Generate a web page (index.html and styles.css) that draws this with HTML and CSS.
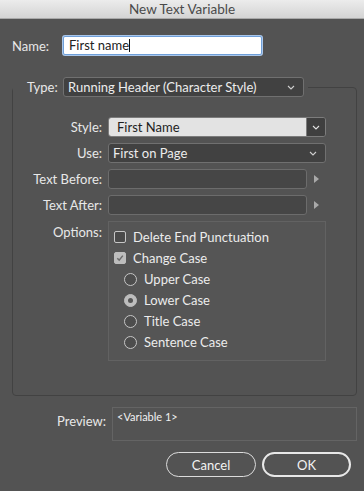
FILE: index.html
```html
<!DOCTYPE html>
<html>
<head>
<meta charset="utf-8">
<link rel="stylesheet" href="styles.css">
</head>
<body>
<div class="dialog">
  <div class="titlebar">New Text Variable</div>
  <div class="content">
    <div class="name-row">
      <span class="lbl name-lbl">Name:</span>
      <div class="name-input">First name<span class="caret"></span></div>
    </div>

    <fieldset class="group">
      <legend class="legend">
        <span class="lbl">Type:</span>
        <div class="select type-select">
          <span>Running Header (Character Style)</span>
          <svg class="chev" width="8" height="5" viewBox="0 0 8 5"><path d="M1 1 L4 4 L7 1" fill="none" stroke="#cfcfcf" stroke-width="1.1"/></svg>
        </div>
      </legend>

      <div class="grid">
        <span class="lbl r">Style:</span>
        <div class="select style-select">
          <span class="style-val">First Name</span>
          <span class="style-btn"><svg width="8" height="5" viewBox="0 0 8 5"><path d="M1 1 L4 4 L7 1" fill="none" stroke="#e0e0e0" stroke-width="1.1"/></svg></span>
        </div>

        <span class="lbl r">Use:</span>
        <div class="select use-select">
          <span>First on Page</span>
          <svg class="chev" width="8" height="5" viewBox="0 0 8 5"><path d="M1 1 L4 4 L7 1" fill="none" stroke="#cfcfcf" stroke-width="1.1"/></svg>
        </div>

        <span class="lbl r">Text Before:</span>
        <div class="field-row">
          <div class="field"></div>
          <svg class="arrow" width="5" height="8" viewBox="0 0 5 8"><path d="M0 0 L5 4 L0 8 Z" fill="#a9a9a9"/></svg>
        </div>

        <span class="lbl r">Text After:</span>
        <div class="field-row">
          <div class="field"></div>
          <svg class="arrow" width="5" height="8" viewBox="0 0 5 8"><path d="M0 0 L5 4 L0 8 Z" fill="#a9a9a9"/></svg>
        </div>

        <span class="lbl r opt-lbl">Options:</span>
        <div class="options">
          <div class="opt">
            <span class="cb"></span><span>Delete End Punctuation</span>
          </div>
          <div class="opt">
            <span class="cb checked"><svg width="10" height="10" viewBox="0 0 10 10"><path d="M2.3 5.2 L4.2 7.2 L7.8 2.6" fill="none" stroke="#6b6b6b" stroke-width="1.5"/></svg></span><span>Change Case</span>
          </div>
          <div class="opt radio-opt">
            <span class="rb"></span><span>Upper Case</span>
          </div>
          <div class="opt radio-opt">
            <span class="rb on"></span><span>Lower Case</span>
          </div>
          <div class="opt radio-opt">
            <span class="rb"></span><span>Title Case</span>
          </div>
          <div class="opt radio-opt">
            <span class="rb"></span><span>Sentence Case</span>
          </div>
        </div>
      </div>
    </fieldset>

    <div class="preview-row">
      <span class="lbl r preview-lbl">Preview:</span>
      <div class="preview">&lt;Variable 1&gt;</div>
    </div>

    <div class="buttons">
      <button class="btn">Cancel</button>
      <button class="btn default">OK</button>
    </div>
  </div>
</div>
</body>
</html>
```

FILE: styles.css
```css
html, body {
  margin: 0;
  padding: 0;
  background: #535353;
}
body {
  width: 364px;
  height: 491px;
  overflow: hidden;
  font-family: "Lato", "Liberation Sans", sans-serif;
  font-size: 13px;
  color: #e6e6e6;
}
.dialog {
  width: 364px;
  height: 491px;
  background: #535353;
}
.titlebar {
  height: 18px;
  line-height: 18px;
  text-align: center;
  background: linear-gradient(#ececec, #d4d4d4);
  border-bottom: 1px solid #a9a9a9;
  color: #4a4a4a;
  font-size: 13.5px;
}
.content {
  padding: 17px 0 0 0;
}
.lbl {
  color: #e8e8e8;
  white-space: nowrap;
}
.r {
  text-align: right;
}
.name-row {
  display: flex;
  align-items: center;
  padding-left: 12px;
  height: 19px;
}
.name-lbl {
  width: 51px;
}
.name-input {
  box-sizing: border-box;
  width: 199px;
  height: 19px;
  background: #fff;
  border: 1px solid #6f9fd8;
  box-shadow: 0 0 0 1px #a9c6ea;
  border-radius: 2px;
  color: #222;
  padding-left: 5px;
  line-height: 17px;
  display: flex;
  align-items: center;
}
.caret {
  display: inline-block;
  width: 1px;
  height: 13px;
  background: #111;
}
.group {
  margin: 22px 0 0 12px;
  width: 345px;
  box-sizing: border-box;
  height: 319px;
  border: 1px solid #424242;
  border-radius: 4px;
  padding: 20px 0 0 0;
}
.legend {
  display: flex;
  align-items: center;
  padding: 0 4px 0 14px;
  margin-left: 0;
}
.legend .lbl {
  width: 36px;
}
.select {
  box-sizing: border-box;
  height: 20px;
  border: 1px solid #707070;
  border-radius: 3px;
  background: #414141;
  display: flex;
  align-items: center;
  justify-content: space-between;
  padding: 0 8px 0 4px;
  color: #ececec;
}
.type-select {
  width: 241px;
}
.grid {
  display: grid;
  grid-template-columns: 89px 218px;
  column-gap: 6px;
  row-gap: 6px;
  align-items: center;
  padding-left: 0;
}
.style-select {
  padding: 0;
  overflow: hidden;
  border-color: #7c7c7c;
}
.style-val {
  flex: 1;
  height: 100%;
  background: #e3e3e3;
  color: #1e1e1e;
  padding-left: 8px;
  display: flex;
  align-items: center;
}
.style-btn {
  width: 18px;
  height: 100%;
  border-left: 1px solid #7c7c7c;
  background: #3f3f3f;
  display: flex;
  align-items: center;
  justify-content: center;
}
.use-select {
  padding-left: 4px;
}
.field-row {
  display: flex;
  align-items: center;
  gap: 7px;
}
.field {
  box-sizing: border-box;
  width: 199px;
  height: 20px;
  border: 1px solid #6c6c6c;
  border-radius: 3px;
  background: #464646;
}
.opt-lbl {
  align-self: start;
  padding-top: 3px;
}
.options {
  box-sizing: border-box;
  height: 140px;
  border: 1px solid #626262;
  background: #555555;
  padding: 8px 0 0 5px;
  display: flex;
  flex-direction: column;
  gap: 7px;
}
.opt {
  display: flex;
  align-items: center;
  gap: 7px;
  height: 14px;
  color: #ececec;
}
.radio-opt {
  padding-left: 10px;
}
.cb {
  box-sizing: border-box;
  width: 12px;
  height: 12px;
  border: 1px solid #c6c6c6;
  border-radius: 2px;
  background: #4a4a4a;
  display: flex;
  align-items: center;
  justify-content: center;
}
.cb.checked {
  background: #bdbdbd;
  border-color: #bdbdbd;
}
.rb {
  box-sizing: border-box;
  width: 13px;
  height: 13px;
  border: 1px solid #c6c6c6;
  border-radius: 50%;
  background: #4d4d4d;
  display: flex;
  align-items: center;
  justify-content: center;
}
.rb.on {
  background: #bdbdbd;
  border-color: #bdbdbd;
}
.rb.on::after {
  content: "";
  width: 5px;
  height: 5px;
  border-radius: 50%;
  background: #555;
}
.preview-row {
  display: flex;
  align-items: flex-start;
  margin-top: 11px;
}
.preview-lbl {
  width: 106px;
  padding-top: 6px;
}
.preview {
  box-sizing: border-box;
  margin-left: 6px;
  width: 245px;
  height: 34px;
  border: 1px solid #646464;
  padding: 2px 0 0 4px;
  font-size: 11px;
  color: #f0f0f0;
}
.buttons {
  display: flex;
  justify-content: flex-end;
  gap: 6px;
  padding-right: 13px;
  margin-top: 11px;
}
.btn {
  box-sizing: border-box;
  height: 25px;
  border-radius: 13px;
  background: #535353;
  border: 1px solid #dcdcdc;
  color: #f2f2f2;
  font-family: "Lato", "Liberation Sans", sans-serif;
  font-size: 13px;
  width: 90px;
  padding: 0;
}
.btn.default {
  width: 89px;
  border: 2px solid #e8e8e8;
}
```
